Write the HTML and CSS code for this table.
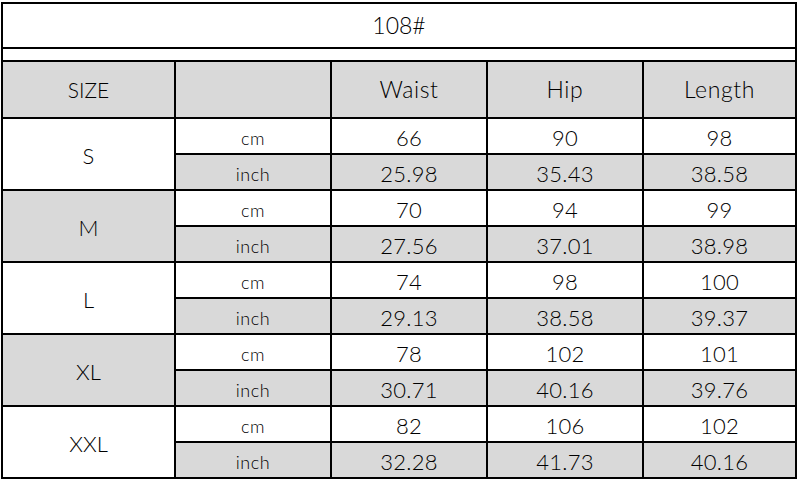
FILE: index.html
```html
<!DOCTYPE html>
<html>
<head>
<meta charset="utf-8">
<link rel="stylesheet" href="styles.css">
</head>
<body>
<div class="chart">
  <div class="cell title">108#</div>
  <div class="cell spacer"></div>
  <div class="cell head">SIZE</div>
  <div class="cell head"></div>
  <div class="cell head big">Waist</div>
  <div class="cell head big">Hip</div>
  <div class="cell head big">Length</div>

  <div class="cell size">S</div>
  <div class="cell unit">cm</div><div class="cell num">66</div><div class="cell num">90</div><div class="cell num">98</div>
  <div class="cell unit gray">inch</div><div class="cell num gray">25.98</div><div class="cell num gray">35.43</div><div class="cell num gray">38.58</div>

  <div class="cell size gray">M</div>
  <div class="cell unit">cm</div><div class="cell num">70</div><div class="cell num">94</div><div class="cell num">99</div>
  <div class="cell unit gray">inch</div><div class="cell num gray">27.56</div><div class="cell num gray">37.01</div><div class="cell num gray">38.98</div>

  <div class="cell size">L</div>
  <div class="cell unit">cm</div><div class="cell num">74</div><div class="cell num">98</div><div class="cell num">100</div>
  <div class="cell unit gray">inch</div><div class="cell num gray">29.13</div><div class="cell num gray">38.58</div><div class="cell num gray">39.37</div>

  <div class="cell size gray">XL</div>
  <div class="cell unit">cm</div><div class="cell num">78</div><div class="cell num">102</div><div class="cell num">101</div>
  <div class="cell unit gray">inch</div><div class="cell num gray">30.71</div><div class="cell num gray">40.16</div><div class="cell num gray">39.76</div>

  <div class="cell size">XXL</div>
  <div class="cell unit">cm</div><div class="cell num">82</div><div class="cell num">106</div><div class="cell num">102</div>
  <div class="cell unit gray">inch</div><div class="cell num gray">32.28</div><div class="cell num gray">41.73</div><div class="cell num gray">40.16</div>
</div>
</body>
</html>
```
FILE: styles.css
```css
html, body {
  margin: 0;
  padding: 0;
  background: #ffffff;
}
body {
  padding: 2px 0 0 1px;
  font-family: "Lato", "DejaVu Sans", sans-serif;
  font-weight: 300;
  color: #000;
}
.chart {
  display: grid;
  width: max-content;
  background: #000;
  padding: 2px;
  gap: 2px;
  grid-template-columns: 171px 154px 154px 154px 151px;
  grid-template-rows: 43px 11px 55px repeat(10, 34px);
}
.cell {
  background: #fff;
  display: flex;
  align-items: center;
  justify-content: center;
  font-size: 22px;
  line-height: 1;
  padding-top: 3px;
  box-sizing: border-box;
}
.num {
  letter-spacing: 0.3px;
}
.title {
  grid-column: 1 / -1;
  font-size: 23px;
  padding-top: 0;
}
.spacer {
  grid-column: 1 / -1;
}
.head {
  background: #d9d9d9;
  font-size: 21px;
  padding-top: 0;
}
.head.big {
  font-size: 23px;
  letter-spacing: 0.6px;
}
.size {
  grid-row: span 2;
  font-size: 22px;
}
.unit {
  font-size: 18px;
  letter-spacing: 0.5px;
}
.gray {
  background: #d9d9d9;
}
```
